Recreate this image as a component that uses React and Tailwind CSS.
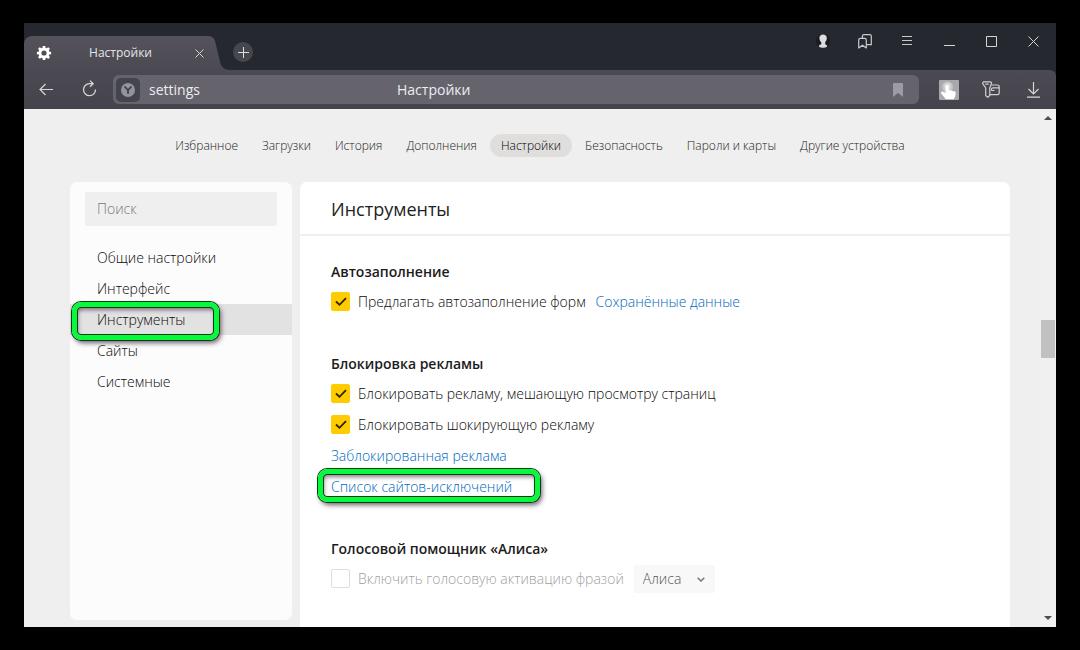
const TOP_LINKS = [
  'Избранное',
  'Загрузки',
  'История',
  'Дополнения',
  'Настройки',
  'Безопасность',
  'Пароли и карты',
  'Другие устройства',
];

const SECTIONS = ['Общие настройки', 'Интерфейс', 'Инструменты', 'Сайты', 'Системные'];

function IconButton({ label, className = '', children }) {
  return (
    <button type="button" aria-label={label} className={`flex shrink-0 items-center justify-center ${className}`}>
      {children}
    </button>
  );
}

// Green frame laid over the item it points at
function Marker({ className }) {
  return (
    <span
      aria-hidden="true"
      className={`pointer-events-none absolute rounded-[9px] border-[5px] border-[#06f93a] shadow-[inset_0_0_0_1px_#0b3a16,inset_1px_3px_4px_rgba(60,40,60,0.6),0_0_0_1px_#0b3a16,2px_3px_5px_rgba(60,40,60,0.75)] ${className}`}
    />
  );
}

function TabBar() {
  return (
    <div className="flex h-[47px] items-end bg-[#26282f] text-[#e4e4e8]">
      <div className="flex h-[34px] w-[183px] items-center rounded-tl-[8px] bg-linear-to-b from-[#54535c] to-[#4b4a53] pl-3">
        <svg width="16" height="16" viewBox="0 0 16 16" fill="#fff" className="shrink-0">
          <path
            fillRule="evenodd"
            d="M6.8 1h2.4l.4 1.9 1 .4 1.700-1.100 1.600 1.600-1.100 1.700.4 1 1.900.4v2.300l-1.900.4-.4 1 1.100 1.700-1.600 1.600-1.700-1.100-1 .4L9.200 15H6.800l-.4-1.900-1-.4-1.700 1.100-1.600-1.600 1.100-1.700-.4-1L.9 9.200V6.900l1.900-.4.4-1-1.100-1.700 1.600-1.600 1.700 1.100 1-.4zM8 5.400a2.600 2.600 0 100 5.200 2.600 2.600 0 000-5.200z"
          />
        </svg>
        <span className="min-w-0 flex-1 pr-[2px] text-center text-[12px] leading-4">Настройки</span>
        <IconButton label="Закрыть вкладку" className="w-[16px]">
          <svg width="9" height="9" viewBox="0 0 9 9" stroke="#d6d6da" fill="none">
            <path d="M.5.5l8 8M8.500.5l-8 8" />
          </svg>
        </IconButton>
      </div>
      <svg width="26" height="34" viewBox="0 0 26 34" className="shrink-0">
        <defs>
          <linearGradient id="tab" x1="0" y1="0" x2="0" y2="1">
            <stop offset="0" stopColor="#54535c" />
            <stop offset="1" stopColor="#4b4a53" />
          </linearGradient>
        </defs>
        <path d="M0 0h1c5 0 6.500 3 7.500 7l4.500 19c1.500 5 4 8 10.500 8H0z" fill="url(#tab)" />
      </svg>
      <IconButton label="Новая вкладка" className="mb-2 size-5 rounded-full bg-[#46474e]">
        <svg width="11" height="11" viewBox="0 0 11 11" stroke="#dcdce0" fill="none">
          <path d="M5.500 0v11M0 5.500h11" />
        </svg>
      </IconButton>

      <div className="ml-auto flex h-full items-start pt-[6px] pr-[2px]">
        <IconButton label="Профиль" className="h-6 w-[42px]">
          <svg width="14" height="16" viewBox="0 0 14 16">
            <circle cx="7" cy="8" r="7" fill="#1b1c22" />
            <path
              d="M7 1.500c2.300 0 3.800 1.300 3.800 3.500 0 1.700-.6 3-1.600 4v2.200l1.700 1v1.500c-2 1.300-5.800 1.300-7.800 0v-1.500l2.200-1V9.200C4.200 8.300 3.400 6.900 3.400 5 3.400 2.800 4.900 1.500 7 1.500z"
              fill="#dcdde2"
            />
          </svg>
        </IconButton>
        <IconButton label="Закладки" className="h-6 w-[42px]">
          <svg width="14" height="15" viewBox="0 0 14 15" fill="none" stroke="#c9cad0" strokeWidth="1.200" strokeLinejoin="round">
            <path d="M.7 6c0-1 .6-1.600 1.600-1.600h4.400c1 0 1.600.6 1.600 1.600v8L4.500 11.200.7 14z" />
            <path d="M4.400 4.200V2.300c0-1 .6-1.600 1.600-1.600h5.700c1 0 1.600.6 1.600 1.600v8.400H8.500" />
          </svg>
        </IconButton>
        <IconButton label="Меню" className="h-6 w-[42px]">
          <svg width="10" height="10" viewBox="0 0 10 10" stroke="#c9cad0" fill="none">
            <path d="M0 .5h10M0 4.500h10M0 8.500h10" />
          </svg>
        </IconButton>
        <IconButton label="Свернуть" className="h-6 w-[42px]">
          <svg width="11" height="11" viewBox="0 0 11 11" stroke="#d6d6da" fill="none">
            <path d="M0 9.500h11" />
          </svg>
        </IconButton>
        <IconButton label="Развернуть" className="h-6 w-[42px]">
          <svg width="11" height="11" viewBox="0 0 11 11" stroke="#d6d6da" fill="none">
            <path d="M.5.5h10v10H.5z" />
          </svg>
        </IconButton>
        <IconButton label="Закрыть" className="h-6 w-[42px]">
          <svg width="11" height="11" viewBox="0 0 11 11" stroke="#d6d6da" fill="none">
            <path d="M.5.5l10 10M10.500.5l-10 10" />
          </svg>
        </IconButton>
      </div>
    </div>
  );
}

function Toolbar() {
  return (
    <div className="bg-[#26282f]">
      <div className="flex h-[39px] items-center rounded-tr-[6px] bg-linear-to-b from-[#4b4a53] to-[#45444c] pr-[2px] text-[#ededf0]">
        <IconButton label="Назад" className="h-7 w-[44px]">
          <svg width="14" height="13" viewBox="0 0 14 13" stroke="#d6d6da" strokeWidth="1.200" fill="none">
            <path d="M14 6.500H1M6.500 1L1 6.500 6.500 12" />
          </svg>
        </IconButton>
        <IconButton label="Обновить" className="h-7 w-[45px] pr-[2px] pb-[2px]">
          <svg width="15" height="17" viewBox="0 0 15 17" stroke="#d6d6da" strokeWidth="1.300" fill="none">
            <path d="M13.500 9.500A6 6 0 117.500 3.700H11M8 .6l3.200 3.100L8 6.800" />
          </svg>
        </IconButton>
        <div className="flex h-[29px] flex-1 items-center rounded-[6px] bg-[#65646d] pl-[3px]">
          <span className="flex size-6 items-center justify-center rounded-[5px] bg-[#43444d]">
            <svg width="14" height="14" viewBox="0 0 14 14">
              <circle cx="7" cy="7" r="7" fill="#93939b" />
              <path d="M3.600 3.500L7 7.300l3.400-3.800M7 7.300V11" stroke="#3c3d46" strokeWidth="1.700" fill="none" />
            </svg>
          </span>
          <input
            aria-label="Адрес"
            defaultValue="settings"
            className="ml-[9px] w-[248px] bg-transparent text-[14px] leading-5 outline-none"
          />
          <span className="flex-1 text-[14px] leading-5">Настройки</span>
          <IconButton label="Добавить в закладки" className="mr-4 w-[10px]">
            <svg width="10" height="14" viewBox="0 0 10 14" fill="#9d9ca4">
              <path d="M0 1c0-.6.400-1 1-1h8c.6 0 1 .4 1 1v13l-5-4-5 4z" />
            </svg>
          </IconButton>
        </div>
        <div className="flex pl-[9px]">
          <IconButton label="Расширение" className="h-7 w-[42px]">
            <svg width="20" height="20" viewBox="0 0 20 20">
              <rect width="20" height="20" rx="1" fill="#a9a9ad" />
              <circle cx="8.500" cy="7" r="5.500" fill="#c6c6ca" />
              <circle cx="8.500" cy="6.500" r="3.200" fill="#dededf" />
              <path
                d="M6.500 6.500c0-2.100 3.300-2.100 3.300 0v3.500l5.200 1.200c1.400.4 1.900 1.100 1.800 2.300L16 17l-1.300 2.200H6.800l-4.600-5.600c-.7-1.500.8-2.600 2.100-1.900l2.200 1.200z"
                fill="#fff"
              />
            </svg>
          </IconButton>
          <IconButton label="Пароли и карты" className="h-7 w-[42px]">
            <svg width="18" height="17" viewBox="0 0 18 17" fill="none" stroke="#d0d0d5" strokeWidth="1.200" strokeLinejoin="round">
              <path d="M2 .8h6.200c1.200.1 1.600.9 1.200 2L7.800 7v7.600L5.700 16.200l-2-1.600V7L.9 2.800C.4 1.700.8.9 2 .8zM3.300 3.100h3.400" />
              <path d="M9.500 4h6.100c1 0 1.600.6 1.600 1.600v6.500c0 1-.6 1.600-1.600 1.600H8M9.500 9.500V8.300c0-1 .5-1.500 1.500-1.500h6M9.500 9.500h3" />
            </svg>
          </IconButton>
          <IconButton label="Загрузки" className="h-7 w-[42px]">
            <svg width="13" height="16" viewBox="0 0 13 16" stroke="#d6d6da" strokeWidth="1.200" fill="none">
              <path d="M6.500 0v11.500M1.500 7l5 5 5-5M0 15.200h13" />
            </svg>
          </IconButton>
        </div>
      </div>
    </div>
  );
}

function Checkbox({ id, label, checked = false, disabled = false }) {
  return (
    <>
      <span className="relative size-[19px] shrink-0">
        <input
          id={id}
          type="checkbox"
          defaultChecked={checked}
          disabled={disabled}
          className="peer block size-[19px] appearance-none rounded-[2px] border border-[#dedede] bg-white checked:border-[#fc0] checked:bg-[#fc0]"
        />
        <svg
          viewBox="0 0 19 19"
          className="pointer-events-none absolute inset-0 hidden size-[19px] peer-checked:block"
          fill="none"
          stroke="#2e2300"
          strokeWidth="1.800"
        >
          <path d="M5 9.500l3.500 3.300L15 6.200" />
        </svg>
      </span>
      <label htmlFor={id} className={`ml-2 whitespace-nowrap ${disabled ? 'text-[#a0a0a0]' : ''}`}>
        {label}
      </label>
    </>
  );
}

function Group({ title, children }) {
  return (
    <section>
      <h2 className="h-[29px] text-[14px] leading-[29px] font-semibold text-[#1c1c1c]">{title}</h2>
      {children}
    </section>
  );
}

function Row({ children }) {
  return <div className="relative flex h-[31px] items-center">{children}</div>;
}

function Sidebar() {
  return (
    <aside className="mb-[7px] w-[222px] shrink-0 rounded-[7px] bg-[#fcfcfc] pt-[10px]">
      <div className="px-[15px]">
        <input
          type="search"
          aria-label="Поиск"
          placeholder="Поиск"
          className="block h-[34px] w-full rounded-[2px] bg-[#efefef] px-3 pb-[2px] placeholder:text-[#777]"
        />
      </div>
      <nav className="mt-4 flex flex-col">
        {SECTIONS.map((name) => {
          const active = name === 'Инструменты';
          return (
            <a
              key={name}
              href="#"
              className={`relative h-[31px] pl-[27px] leading-[31px] ${active ? 'z-10 bg-[#e2e2e2]' : ''}`}
            >
              {name}
              {active && <Marker className="-top-[2px] left-[2px] h-[38px] w-[147px]" />}
            </a>
          );
        })}
      </nav>
    </aside>
  );
}

function Scrollbar() {
  return (
    <div className="flex w-4 shrink-0 flex-col items-center bg-[#f0f0f0] py-[6px]" aria-hidden="true">
      <svg width="8" height="5" viewBox="0 0 8 5" fill="#4d4d4d">
        <path d="M0 5l4-4 4 4z" />
      </svg>
      <div className="w-full flex-1 pt-[200px]">
        <div className="ml-px h-[38px] w-[14px] bg-[#c1c1c1]" />
      </div>
      <svg width="8" height="5" viewBox="0 0 8 5" fill="#4d4d4d">
        <path d="M0 0l4 4 4-4z" />
      </svg>
    </div>
  );
}

export default function App() {
  return (
    <div className="flex min-h-screen flex-col bg-black px-6 py-[23px] font-['Open_Sans','Noto_Sans',sans-serif] text-[14px] text-[#0a0a0a]">
      <TabBar />
      <Toolbar />
      <div className="flex flex-1 bg-[#efefef] font-light">
        <div className="flex min-w-0 flex-1 flex-col pr-[30px] pl-[46px]">
          <nav className="flex justify-center gap-[2px] pt-[25px] text-[12px] text-[#1c1c1c]">
            {TOP_LINKS.map((name) => (
              <a
                key={name}
                href="#"
                className={`h-[23px] rounded-full px-[11px] leading-[24px] whitespace-nowrap ${
                  name === 'Настройки' ? 'bg-[#dfdedd] text-black' : ''
                }`}
              >
                {name}
              </a>
            ))}
          </nav>

          <div className="mt-[25px] flex flex-1 gap-2">
            <Sidebar />
            <main className="min-w-0 flex-1 rounded-t-[7px] bg-white">
              <h1 className="h-[54px] border-b-2 border-[#efefef] px-[31px] text-[18px] leading-[54px] font-normal text-[#222]">
                Инструменты
              </h1>
              <div className="flex flex-col gap-8 px-[31px] pt-[21px]">
                <Group title="Автозаполнение">
                  <Row>
                    <Checkbox id="autofill" label="Предлагать автозаполнение форм" checked />
                    <a href="#" className="ml-[10px] whitespace-nowrap text-[#0068bd]">
                      Сохранённые данные
                    </a>
                  </Row>
                </Group>

                <Group title="Блокировка рекламы">
                  <Row>
                    <Checkbox id="ads" label="Блокировать рекламу, мешающую просмотру страниц" checked />
                  </Row>
                  <Row>
                    <Checkbox id="shock" label="Блокировать шокирующую рекламу" checked />
                  </Row>
                  <Row>
                    <a href="#" className="text-[#0068bd]">
                      Заблокированная реклама
                    </a>
                  </Row>
                  <Row>
                    <a href="#" className="text-[#0068bd]">
                      Список сайтов-исключений
                    </a>
                    <Marker className="-top-[2px] -left-[13px] h-[33px] w-[222px]" />
                  </Row>
                </Group>

                <Group title="Голосовой помощник «Алиса»">
                  <Row>
                    <Checkbox id="voice" label="Включить голосовую активацию фразой" disabled />
                    <div className="relative ml-[10px]">
                      <select
                        aria-label="Фраза активации"
                        disabled
                        className="block h-7 w-[81px] appearance-none rounded-[2px] bg-[#f8f8f8] pl-[9px] text-[#555]"
                      >
                        <option>Алиса</option>
                      </select>
                      <svg
                        width="8"
                        height="5"
                        viewBox="0 0 8 5"
                        fill="none"
                        stroke="#777"
                        strokeWidth="1.500"
                        className="pointer-events-none absolute top-[12px] right-[10px]"
                      >
                        <path d="M.7.7L4 4 7.300.7" />
                      </svg>
                    </div>
                  </Row>
                </Group>
              </div>
            </main>
          </div>
        </div>
        <Scrollbar />
      </div>
    </div>
  );
}
